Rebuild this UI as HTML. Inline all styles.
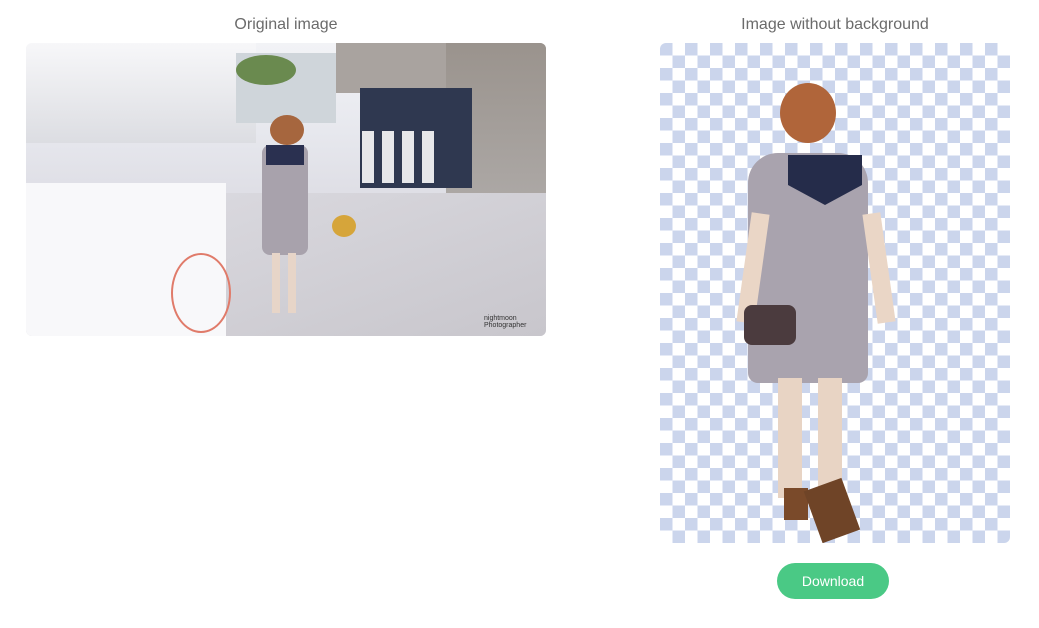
<!DOCTYPE html>
<html><head><style>
body{margin:0;width:1039px;height:628px;background:#fff;position:relative;overflow:hidden;font-family:"Liberation Sans",sans-serif}
.t{position:absolute;font-size:16px;color:#6b6b6b;text-align:center}
.a{position:absolute}
</style></head><body>
<div class="t" style="left:26px;width:520px;top:16px">Original image</div>
<div class="t" style="left:660px;width:350px;top:16px">Image without background</div>

<div class="a" style="left:26px;top:43px;width:520px;height:293px;border-radius:6px;overflow:hidden;background:linear-gradient(#f2f3f6 0%,#e7e8ee 30%,#dfdfe6 50%,#d8d7de 100%)">
 <div class="a" style="left:0;top:0;width:230px;height:100px;background:linear-gradient(#f7f7f9,#dcdde2)"></div>
 <div class="a" style="left:210px;top:10px;width:100px;height:70px;background:#cfd5da"></div>
 <div class="a" style="left:310px;top:0;width:210px;height:50px;background:#a9a39f"></div>
 <div class="a" style="left:420px;top:0;width:100px;height:230px;background:linear-gradient(#9a938d,#b5b2b1)"></div>
 <div class="a" style="left:334px;top:45px;width:112px;height:100px;background:#2f3850"></div>
 <div class="a" style="left:336px;top:88px;width:80px;height:52px;background:repeating-linear-gradient(90deg,#e7e7ea 0 12px,#2f3850 12px 20px)"></div>
 <div class="a" style="left:340px;top:150px;width:160px;height:40px;background:#3a3f4a;transform:skewX(-20deg)"></div>
 <div class="a" style="left:210px;top:12px;width:60px;height:30px;border-radius:50%;background:#6a8a4f"></div>
 <div class="a" style="left:0;top:140px;width:200px;height:153px;background:#f8f8fa"></div>
 <div class="a" style="left:200px;top:150px;width:320px;height:143px;background:linear-gradient(160deg,#d9d8de,#c8c6cc)"></div>
 <div class="a" style="left:244px;top:72px;width:34px;height:30px;border-radius:50%;background:#a6663e"></div>
 <div class="a" style="left:236px;top:102px;width:46px;height:110px;border-radius:8px;background:#a8a2ac"></div>
 <div class="a" style="left:240px;top:102px;width:38px;height:20px;background:#2a3050"></div>
 <div class="a" style="left:246px;top:210px;width:8px;height:60px;background:#e7d5c8"></div>
 <div class="a" style="left:262px;top:210px;width:8px;height:60px;background:#e7d5c8"></div>
 <div class="a" style="left:306px;top:172px;width:24px;height:22px;border-radius:50%;background:#d6a53a"></div>
 <div class="a" style="left:145px;top:210px;width:60px;height:80px;border:2px solid #e07b6a;border-radius:50%;box-sizing:border-box"></div>
 <div class="a" style="left:458px;top:272px;font-size:7px;color:#333;line-height:7px">nightmoon<br>Photographer</div>
</div>

<div class="a" style="left:660px;top:43px;width:350px;height:500px;border-radius:6px;overflow:hidden;background-color:#fff;background-image:linear-gradient(45deg,#cbd5ec 25%,transparent 25%,transparent 75%,#cbd5ec 75%),linear-gradient(45deg,#cbd5ec 25%,transparent 25%,transparent 75%,#cbd5ec 75%);background-size:25px 25px;background-position:12.5px 0,0 12.5px">
 <div class="a" style="left:120px;top:40px;width:56px;height:60px;border-radius:50%;background:#b0653a"></div>
 <div class="a" style="left:88px;top:110px;width:120px;height:230px;border-radius:30px 30px 10px 10px;background:#a9a3ae"></div>
 <div class="a" style="left:128px;top:112px;width:74px;height:50px;background:#252c4a;clip-path:polygon(0 0,100% 0,100% 60%,50% 100%,0 60%)"></div>
 <div class="a" style="left:84px;top:170px;width:18px;height:110px;background:#ead6c6;transform:rotate(8deg)"></div>
 <div class="a" style="left:210px;top:170px;width:18px;height:110px;background:#ead6c6;transform:rotate(-8deg)"></div>
 <div class="a" style="left:84px;top:262px;width:52px;height:40px;border-radius:8px;background:#4b3b3e"></div>
 <div class="a" style="left:118px;top:335px;width:24px;height:120px;background:#e8d4c4"></div>
 <div class="a" style="left:158px;top:335px;width:24px;height:120px;background:#e8d4c4"></div>
 <div class="a" style="left:124px;top:445px;width:24px;height:32px;background:#7a4a2a"></div>
 <div class="a" style="left:152px;top:440px;width:40px;height:55px;background:#6f4427;transform:rotate(-20deg)"></div>
</div>

<div class="a" style="left:777px;top:563px;width:112px;height:36px;border-radius:18px;background:#4ac985;color:#fff;font-size:14px;line-height:36px;text-align:center">Download</div>
</body></html>
